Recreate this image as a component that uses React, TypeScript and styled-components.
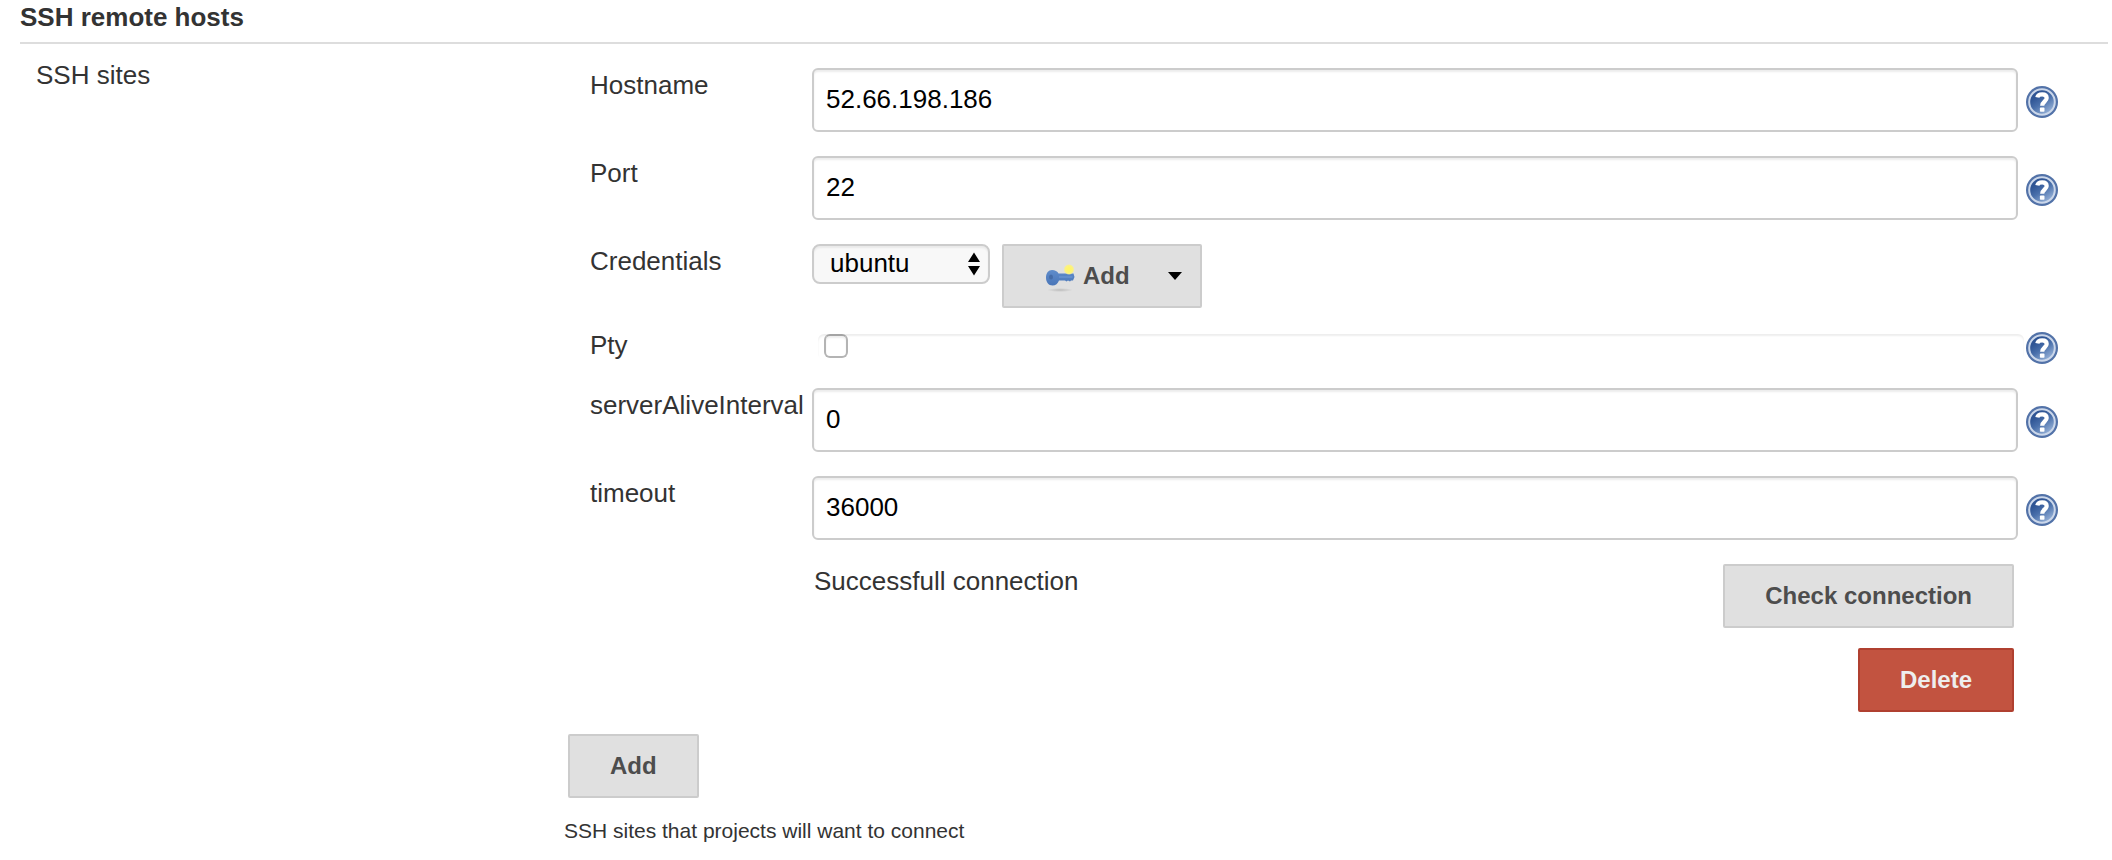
import React, { useId } from 'react';
import styled, { createGlobalStyle } from 'styled-components';

const GlobalStyle = createGlobalStyle`
  *, *::before, *::after { box-sizing: border-box; }
  body {
    margin: 0;
    background: #fff;
    color: #333;
    font-family: "Liberation Sans", Arial, Helvetica, sans-serif;
    font-size: 26px;
    line-height: 34px;
  }
  input, select, button { font-family: inherit; margin: 0; }
`;

const Page = styled.main`
  padding: 0 4px 12px 20px;
`;

const SectionTitle = styled.h1`
  margin: 0;
  padding-bottom: 8px;
  border-bottom: 2px solid #ddd;
  font-size: 26px;
  line-height: 34px;
  font-weight: bold;
`;

const SectionBody = styled.div`
  display: flex;
  align-items: flex-start;
  padding: 14px 50px 0 16px;
`;

const SectionName = styled.div`
  flex: 0 0 532px;
`;

const Sites = styled.div`
  flex: 1;
  min-width: 0;
  padding-top: 10px;
`;

const Site = styled.form`
  padding-left: 22px;
`;

const Entry = styled.div<{ $height?: number }>`
  display: grid;
  grid-template-columns: 214px minmax(0, 1fr) 32px;
  column-gap: 8px;
  align-items: start;
  min-height: ${(p) => p.$height ?? 88}px;
`;

const Label = styled.label`
  white-space: nowrap;
`;

const TextInput = styled.input`
  width: 100%;
  height: 64px;
  padding: 0 12px 2px;
  border: 2px solid #ccc;
  border-radius: 6px;
  background: #fff;
  box-shadow: inset 0 2px 2px rgba(0, 0, 0, 0.08);
  color: #000;
  font-size: 26px;
`;

const HelpButton = styled.button<{ $top?: number }>`
  display: block;
  width: 32px;
  height: 32px;
  margin-top: ${(p) => p.$top ?? 18}px;
  padding: 0;
  border: 0;
  background: none;
  cursor: pointer;
  svg { display: block; }
`;

const Controls = styled.div`
  display: flex;
  align-items: flex-start;
  gap: 12px;
`;

const SelectBox = styled.div`
  display: grid;
  width: 178px;
  > * { grid-area: 1 / 1; }
  > svg { justify-self: end; align-self: center; margin-right: 10px; pointer-events: none; }
`;

const Select = styled.select`
  appearance: none;
  width: 100%;
  height: 40px;
  padding: 0 30px 2px 16px;
  border: 2px solid #ccc;
  border-radius: 8px;
  background: #f8f8f8;
  box-shadow: inset 0 2px 2px rgba(0, 0, 0, 0.06);
  color: #000;
  font-size: 26px;
`;

const Button = styled.button<{ $danger?: boolean }>`
  display: inline-flex;
  align-items: center;
  height: 64px;
  padding: 0 40px;
  border: 2px solid ${(p) => (p.$danger ? '#b04030' : '#ccc')};
  border-radius: 2px;
  background: ${(p) => (p.$danger ? '#c25340' : '#e0e0e0')};
  color: ${(p) => (p.$danger ? '#eee' : '#4d4d4d')};
  font-size: 24px;
  font-weight: bold;
  white-space: nowrap;
  cursor: pointer;
`;

const MenuButton = styled(Button)`
  gap: 7px;
  padding-right: 18px;
  > svg:last-child { margin-left: 31px; }
`;

const CheckArea = styled.div`
  margin: 6px -6px 0 6px;
  height: 26px;
  padding-left: 6px;
  border-radius: 6px;
  box-shadow: inset 0 2px 2px #eee;
`;

const Checkbox = styled.input`
  appearance: none;
  display: block;
  width: 24px;
  height: 24px;
  border: 2px solid #b4b4b4;
  border-top-color: #a4a4a4;
  border-radius: 6px;
  background: #fff;
  box-shadow: inset 0 2px 2px #eee;
  &:checked { background: #4a7ab5; }
`;

const CheckRow = styled.div`
  display: flex;
  justify-content: space-between;
  align-items: flex-start;
  padding: 0 44px 0 224px;
`;

const DeleteRow = styled.div`
  display: flex;
  justify-content: flex-end;
  padding: 20px 44px 22px 0;
`;

const HelpText = styled.p`
  margin: 20px 0 0 -4px;
  font-size: 21px;
  line-height: 26px;
`;

function Help({ topic, top }: { topic: string; top?: number }) {
  const id = useId();
  return (
    <HelpButton type="button" aria-label={`Help for ${topic}`} $top={top}>
      <svg width="32" height="32" viewBox="0 0 32 32" aria-hidden="true">
        <defs>
          <linearGradient id={id} x1="0.15" y1="0.1" x2="0.8" y2="1">
            <stop offset="0.2" stopColor="#2f5595" />
            <stop offset="0.5" stopColor="#4a70ab" />
            <stop offset="1" stopColor="#a3bcdf" />
          </linearGradient>
        </defs>
        <circle cx="16" cy="16" r="16" fill="#5272a8" />
        <circle cx="16" cy="16" r="12.8" fill={`url(#${id})`} stroke="#cbd7ea" strokeWidth="2" />
        <path d="M11.3 11.4C11.8 9 13.7 8.400 16.2 8.400C19.2 8.400 20.700 9.8 20.700 12C20.700 15.200 16.200 15.600 16.200 19.800" fill="none" stroke="#fff" strokeWidth="4.2" />
        <rect x="13.9" y="21.6" width="4.6" height="4.2" rx="0.8" fill="#fff" />
      </svg>
    </HelpButton>
  );
}

function KeyIcon() {
  return (
    <svg width="32" height="32" viewBox="0 0 32 32" aria-hidden="true">
      <defs>
        <radialGradient id="key-glow">
          <stop offset="0.3" stopColor="#fff56a" />
          <stop offset="0.75" stopColor="#fbf184" />
          <stop offset="1" stopColor="#fbf184" stopOpacity="0" />
        </radialGradient>
        <radialGradient id="key-shadow">
          <stop offset="0" stopColor="#bcbcbc" />
          <stop offset="1" stopColor="#bcbcbc" stopOpacity="0" />
        </radialGradient>
        <linearGradient id="key-body" x1="0" y1="0" x2="0" y2="1">
          <stop offset="0" stopColor="#5f8ccb" />
          <stop offset="1" stopColor="#4a76b8" />
        </linearGradient>
      </defs>
      <ellipse cx="16" cy="30" rx="13" ry="2" fill="url(#key-shadow)" />
      <path d="M8 10C11 10 13.5 11.5 14.5 13.5H29.5L30.5 17L29 20.5H27L26 21.5L24 20.5L22.5 21.5L21 20.5H15C14 23.5 11.5 25.5 8.5 25.5C4.5 25.5 2 22 2 17.5C2 13 4.500 10 8 10Z" fill="url(#key-body)" />
      <path d="M15 17H28.5" stroke="#6c97d2" strokeWidth="1.2" />
      <ellipse cx="7" cy="17" rx="2" ry="2.6" fill="#456ca8" />
      <circle cx="25" cy="9.500" r="5.500" fill="url(#key-glow)" />
    </svg>
  );
}

function TextEntry({ label, value }: { label: string; value: string }) {
  const id = useId();
  return (
    <Entry>
      <Label htmlFor={id}>{label}</Label>
      <TextInput id={id} type="text" defaultValue={value} />
      <Help topic={label} />
    </Entry>
  );
}

export default function App() {
  return (
    <>
      <GlobalStyle />
      <Page>
        <SectionTitle>SSH remote hosts</SectionTitle>
        <SectionBody>
          <SectionName>SSH sites</SectionName>
          <Sites>
            <Site onSubmit={(e) => e.preventDefault()}>
              <TextEntry label="Hostname" value="52.66.198.186" />
              <TextEntry label="Port" value="22" />
              <Entry $height={84}>
                <Label htmlFor="credentials">Credentials</Label>
                <Controls>
                  <SelectBox>
                    <Select id="credentials" defaultValue="ubuntu">
                      <option value="ubuntu">ubuntu</option>
                    </Select>
                    <svg width="12" height="24" viewBox="0 0 12 24" aria-hidden="true">
                      <path d="M6 0.500L12 10H0ZM0 14H12L6 23.500Z" fill="#000" />
                    </svg>
                  </SelectBox>
                  <MenuButton type="button" aria-haspopup="menu">
                    <KeyIcon />
                    Add
                    <svg width="14" height="8" viewBox="0 0 14 8" aria-hidden="true">
                      <path d="M0 0H14L7 8Z" fill="#000" />
                    </svg>
                  </MenuButton>
                </Controls>
              </Entry>
              <Entry $height={60}>
                <Label htmlFor="pty">Pty</Label>
                <CheckArea>
                  <Checkbox id="pty" type="checkbox" />
                </CheckArea>
                <Help topic="Pty" top={4} />
              </Entry>
              <TextEntry label="serverAliveInterval" value="0" />
              <TextEntry label="timeout" value="36000" />
              <CheckRow>
                <span role="status">Successfull connection</span>
                <Button type="button">Check connection</Button>
              </CheckRow>
              <DeleteRow>
                <Button type="button" $danger>Delete</Button>
              </DeleteRow>
            </Site>
            <Button type="button">Add</Button>
            <HelpText>SSH sites that projects will want to connect</HelpText>
          </Sites>
        </SectionBody>
      </Page>
    </>
  );
}
